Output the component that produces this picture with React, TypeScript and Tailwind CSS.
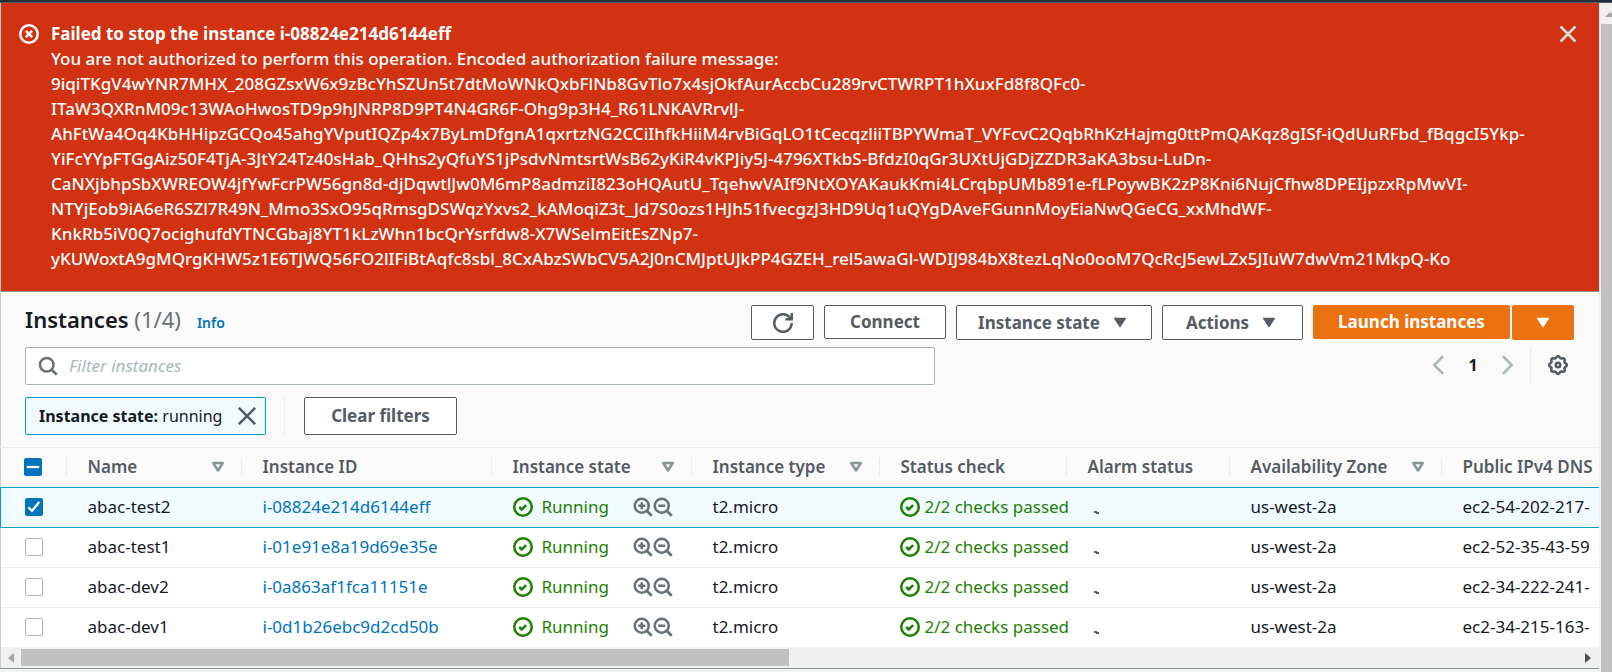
import React from "react";

const MESSAGE_LINES = [
  "You are not authorized to perform this operation. Encoded authorization failure message:",
  "9iqiTKgV4wYNR7MHX_208GZsxW6x9zBcYhSZUn5t7dtMoWNkQxbFlNb8GvTlo7x4sjOkfAurAccbCu289rvCTWRPT1hXuxFd8f8QFc0-",
  "ITaW3QXRnM09c13WAoHwosTD9p9hJNRP8D9PT4N4GR6F-Ohg9p3H4_R61LNKAVRrvlJ-",
  "AhFtWa4Oq4KbHHipzGCQo45ahgYVputIQZp4x7ByLmDfgnA1qxrtzNG2CCiIhfkHiiM4rvBiGqLO1tCecqzliiTBPYWmaT_VYFcvC2QqbRhKzHajmg0ttPmQAKqz8gISf-iQdUuRFbd_fBqgcI5Ykp-",
  "YiFcYYpFTGgAiz50F4TjA-3JtY24Tz40sHab_QHhs2yQfuYS1jPsdvNmtsrtWsB62yKiR4vKPJiy5J-4796XTkbS-BfdzI0qGr3UXtUjGDjZZDR3aKA3bsu-LuDn-",
  "CaNXjbhpSbXWREOW4jfYwFcrPW56gn8d-djDqwtlJw0M6mP8admziI823oHQAutU_TqehwVAIf9NtXOYAKaukKmi4LCrqbpUMb891e-fLPoywBK2zP8Kni6NujCfhw8DPEIjpzxRpMwVI-",
  "NTYjEob9iA6eR6SZl7R49N_Mmo3SxO95qRmsgDSWqzYxvs2_kAMoqiZ3t_Jd7S0ozs1HJh51fvecgzJ3HD9Uq1uQYgDAveFGunnMoyEiaNwQGeCG_xxMhdWF-",
  "KnkRb5iV0Q7ocighufdYTNCGbaj8YT1kLzWhn1bcQrYsrfdw8-X7WSelmEitEsZNp7-",
  "yKUWoxtA9gMQrgKHW5z1E6TJWQ56FO2lIFiBtAqfc8sbl_8CxAbzSWbCV5A2J0nCMJptUJkPP4GZEH_rel5awaGl-WDIJ984bX8tezLqNo0ooM7QcRcJ5ewLZx5JIuW7dwVm21MkpQ-Ko",
];

const COLUMNS = [
  { label: "Name", width: "w-[175px]", sort: true },
  { label: "Instance ID", width: "w-[250px]", sort: false },
  { label: "Instance state", width: "w-[200px]", sort: true },
  { label: "Instance type", width: "w-[188px]", sort: true },
  { label: "Status check", width: "w-[187px]", sort: false },
  { label: "Alarm status", width: "w-[163px]", sort: false },
  { label: "Availability Zone", width: "w-[212px]", sort: true },
  { label: "Public IPv4 DNS", width: "w-[400px]", sort: false },
];

const ROWS = [
  { name: "abac-test2", id: "i-08824e214d6144eff", dns: "ec2-54-202-217-", selected: true },
  { name: "abac-test1", id: "i-01e91e8a19d69e35e", dns: "ec2-52-35-43-59", selected: false },
  { name: "abac-dev2", id: "i-0a863af1fca11151e", dns: "ec2-34-222-241-", selected: false },
  { name: "abac-dev1", id: "i-0d1b26ebc9d2cd50b", dns: "ec2-34-215-163-", selected: false },
];

type IconProps = { className?: string; children: React.ReactNode; strokeWidth?: number };

function Icon({ className = "size-5", children, strokeWidth = 2 }: IconProps) {
  return (
    <svg
      viewBox="0 0 16 16"
      className={`shrink-0 ${className}`}
      fill="none"
      stroke="currentColor"
      strokeWidth={strokeWidth}
      aria-hidden="true"
    >
      {children}
    </svg>
  );
}

function Caret() {
  return (
    <Icon className="size-5" strokeWidth={1}>
      <path d="M3.6 4.2h8.8L8 11z" fill="currentColor" strokeLinejoin="round" />
    </Icon>
  );
}

function SortIcon() {
  return (
    <Icon className="size-5 text-[#879596]">
      <path d="M4.2 4.8h7.6L8 10.8z" strokeLinejoin="round" />
    </Icon>
  );
}

function PositiveIcon() {
  return (
    <Icon className="size-5">
      <circle cx="8" cy="8" r="7" />
      <path d="m5 8 2 2 3.5-3.5" />
    </Icon>
  );
}

function ZoomIcon({ plus }: { plus: boolean }) {
  return (
    <Icon className="size-5">
      <circle cx="7" cy="7" r="5.6" strokeWidth="2" />
      <path d="m11 11 4 4" strokeWidth="2.2" />
      <path d="M4.2 7h5.6" />
      {plus && <path d="M7 4.2v5.6" />}
    </Icon>
  );
}

const GEAR_PATH =
  Array.from({ length: 96 }, (_, i) => {
    const angle = (i / 96) * Math.PI * 2;
    const radius = 6.4 + 0.7 * Math.cos(angle * 8);
    return `${i ? "L" : "M"}${(8 + radius * Math.cos(angle)).toFixed(2)} ${(8 + radius * Math.sin(angle)).toFixed(2)}`;
  }).join("") + "Z";

const BUTTON =
  "flex items-center justify-center rounded-xs border border-[#545b64] bg-white font-bold text-[#545b64]";

function Banner() {
  return (
    <section className="flex items-start border-b border-[#879596] bg-[#d13212] pt-[18px] pr-[21px] pb-5 pl-[18px] text-white">
      <Icon className="mt-[3px] size-5">
        <circle cx="8" cy="8" r="7" />
        <path d="m5.5 5.5 5 5M10.5 5.5l-5 5" />
      </Icon>
      <div className="ml-3 min-w-0 flex-1 leading-[25px] whitespace-nowrap">
        <h2 className="font-bold">Failed to stop the instance i-08824e214d6144eff</h2>
        <p className="font-medium">
          {MESSAGE_LINES.map((line) => (
            <span key={line} className="block">
              {line}
            </span>
          ))}
        </p>
      </div>
      <button type="button" aria-label="Dismiss" className="mt-[3px] text-[#d5dbdb]">
        <Icon>
          <path d="m2 2 12 12M14 2 2 14" />
        </Icon>
      </button>
    </section>
  );
}

function Toolbar() {
  return (
    <div className="bg-[#fafafa] pt-[13px] pr-[25px] pb-3 pl-6">
      <div className="flex items-start justify-between">
        <div className="flex items-baseline">
          <h1 className="text-[22px] leading-7 font-semibold text-[#16191f]">
            Instances <span className="font-normal text-[#687078]">(1/4)</span>
          </h1>
          <a href="#info" className="ml-4 text-sm font-semibold text-[#0073bb]">
            Info
          </a>
        </div>
        <div className="flex items-start gap-[10px]">
          <button type="button" aria-label="Refresh" className={`${BUTTON} h-[35px] w-[63px]`}>
            <Icon>
              <path d="M10 5h5V0" />
              <path d="M15 8a7 7 0 1 1-.9-3.4" />
            </Icon>
          </button>
          <button type="button" className={`${BUTTON} h-[34px] w-[122px]`}>
            Connect
          </button>
          <button type="button" className={`${BUTTON} h-[35px] w-[196px] gap-[10px]`}>
            Instance state <Caret />
          </button>
          <button type="button" className={`${BUTTON} h-[35px] w-[141px] gap-[10px]`}>
            Actions <Caret />
          </button>
          <div className="flex items-start gap-[2px] font-bold text-white">
            <button type="button" className="h-[34px] w-[197px] rounded-xs bg-[#ec7211]">
              Launch instances
            </button>
            <button
              type="button"
              aria-label="More launch options"
              className="flex h-[35px] w-[62px] items-center justify-center rounded-xs bg-[#ec7211]"
            >
              <Caret />
            </button>
          </div>
        </div>
      </div>

      <div className="mt-[7px] flex items-start justify-between">
        <label className="flex h-[38px] w-[910px] items-center rounded-xs border border-[#aab7b8] bg-white pl-3 text-[#687078]">
          <Icon>
            <circle cx="7" cy="7" r="5.4" />
            <path d="m11 11 4 4" />
          </Icon>
          <input
            type="text"
            aria-label="Filter instances"
            placeholder="Filter instances"
            className="ml-[11px] min-w-0 flex-1 bg-transparent outline-none placeholder:text-[#aab7b8] placeholder:italic"
          />
        </label>
        <nav aria-label="Pagination" className="flex h-[35px] items-center">
          <button type="button" aria-label="Previous page" className="text-[#aab7b8]">
            <Icon>
              <path d="M12 1 5 8l7 7" />
            </Icon>
          </button>
          <button type="button" aria-current="page" className="w-[50px] text-center text-base font-bold text-[#16191f]">
            1
          </button>
          <button type="button" aria-label="Next page" className="text-[#aab7b8]">
            <Icon>
              <path d="m4 1 7 7-7 7" />
            </Icon>
          </button>
          <button
            type="button"
            aria-label="Preferences"
            className="ml-3 flex h-full items-center border-l border-[#eaeded] pr-[6px] pl-[17px] text-[#545b64]"
          >
            <Icon>
              <path d={GEAR_PATH} />
              <circle cx="8" cy="8" r="1.8" />
            </Icon>
          </button>
        </nav>
      </div>

      <div className="mt-3 flex items-center">
        <div className="flex h-[38px] w-[241px] items-center justify-between rounded-xs border border-[#00a1c9] bg-[#f1faff] pr-2 pl-[13px] text-base text-[#16191f]">
          <span>
            <b className="font-bold">Instance state:</b> running
          </span>
          <button type="button" aria-label="Remove filter" className="text-[#545b64]">
            <Icon>
              <path d="m1.5 1.5 13 13M14.5 1.5l-13 13" />
            </Icon>
          </button>
        </div>
        <div className="ml-[18px] flex border-l border-[#eaeded] pl-[19px]">
          <button type="button" className={`${BUTTON} h-[38px] w-[153px]`}>
            Clear filters
          </button>
        </div>
      </div>
    </div>
  );
}

function CheckBox({ label, checked, mixed }: { label: string; checked: boolean; mixed?: boolean }) {
  return (
    <label className="grid size-[18px] place-items-center">
      <input
        type="checkbox"
        aria-label={label}
        defaultChecked={checked}
        className="peer col-start-1 row-start-1 size-[18px] appearance-none rounded-xs border border-[#aab7b8] bg-white checked:border-[#0073bb] checked:bg-[#0073bb]"
      />
      <Icon className="pointer-events-none col-start-1 row-start-1 size-[18px] text-white opacity-0 peer-checked:opacity-100">
        {mixed ? <path d="M2.5 8h11" /> : <path d="m3 8.3 3.2 3.2L12.6 3.6" />}
      </Icon>
    </label>
  );
}

function InstanceTable() {
  return (
    <div className="-ml-px overflow-hidden border-t border-[#eaeded]">
      <table className="w-[1841px] table-fixed border-collapse text-left whitespace-nowrap">
        <thead className="bg-[#fafafa] text-[#545b64]">
          <tr className="h-[39px]">
            <th className="w-[66px] p-0">
              <div className="flex h-[18px] justify-between border-r border-[#eaeded] pl-[23px]">
                <CheckBox label="Select all instances" checked mixed />
              </div>
            </th>
            {COLUMNS.map((col) => (
              <th key={col.label} scope="col" className={`${col.width} p-0 font-semibold`}>
                <div className="flex h-[18px] items-center justify-between border-r border-[#eaeded] pr-[13px] pl-[21px]">
                  {col.label}
                  {col.sort && <SortIcon />}
                </div>
              </th>
            ))}
          </tr>
        </thead>
        <tbody className="text-[#16191f]">
          {ROWS.map((row) => (
            <tr
              key={row.id}
              className={
                row.selected
                  ? "h-10 border-y border-l border-[#00a1c9] bg-[#f1faff]"
                  : "h-10 border-b border-[#eaeded] bg-white last:border-b-0"
              }
            >
              <td className="p-0 pl-6">
                <CheckBox label={`Select ${row.name}`} checked={row.selected} />
              </td>
              <td className="p-0 pl-[21px]">{row.name}</td>
              <td className="p-0 pl-[21px]">
                <a href={`#${row.id}`} className="text-[#0073bb]">
                  {row.id}
                </a>
              </td>
              <td className="p-0 pl-[21px]">
                <div className="flex items-center text-[#1d8102]">
                  <PositiveIcon />
                  <span className="ml-[9px] w-[91px]">Running</span>
                  <button type="button" aria-label="Include this state" className="text-[#687078]">
                    <ZoomIcon plus />
                  </button>
                  <button type="button" aria-label="Exclude this state" className="text-[#687078]">
                    <ZoomIcon plus={false} />
                  </button>
                </div>
              </td>
              <td className="p-0 pl-[21px]">t2.micro</td>
              <td className="p-0 pl-5">
                <div className="flex items-center gap-[5px] text-[#1d8102]">
                  <PositiveIcon />
                  <span>2/2 checks passed</span>
                </div>
              </td>
              <td className="p-0 pl-[27px]">
                <svg viewBox="0 0 6 20" className="h-5 w-[6px]" aria-hidden="true">
                  <path d="M0 14h3v1h2v2H2v-1H0z" fill="#545b64" />
                </svg>
              </td>
              <td className="p-0 pl-[21px]">us-west-2a</td>
              <td className="p-0 pl-[21px]">{row.dns}</td>
            </tr>
          ))}
        </tbody>
      </table>
    </div>
  );
}

export default function App() {
  return (
    <div className="min-h-screen bg-[#f2f3f3] font-['Noto_Sans',sans-serif] text-[17px] leading-6">
      <div className="h-[3px] border-b border-[#545b64] bg-[#232f3e]" />
      <div className="flex">
        <main className="min-w-0 flex-1">
          <div className="border-l border-black/15">
            <Banner />
            <Toolbar />
            <InstanceTable />
          </div>
          <div className="flex h-[21px] items-center border-l border-black/15 bg-[#f0f0f0] pr-2 pl-[7px]">
            <svg viewBox="0 0 6 10" className="h-[10px] w-[6px] text-[#a3a3a3]" aria-hidden="true">
              <path d="M6 0v10L0 5z" fill="currentColor" />
            </svg>
            <div className="mx-[7px] flex-1">
              <div className="h-[17px] w-[49.3%] bg-[#c1c1c1]" />
            </div>
            <svg viewBox="0 0 6 10" className="h-[10px] w-[6px] text-[#505050]" aria-hidden="true">
              <path d="M0 0v10l6-5z" fill="currentColor" />
            </svg>
          </div>
          <div className="h-px bg-[#879596]" />
        </main>
        <div className="flex min-h-[669px] w-[13px] flex-col items-end overflow-hidden bg-[#f0f0f0]">
          <svg viewBox="0 0 8 21" className="h-[21px] w-2 shrink-0" aria-hidden="true">
            <path d="M1 14 6 9l5 5z" fill="#a3a3a3" />
          </svg>
          <div className="w-[11px] flex-1 bg-[#c1c1c1]" />
        </div>
      </div>
    </div>
  );
}
